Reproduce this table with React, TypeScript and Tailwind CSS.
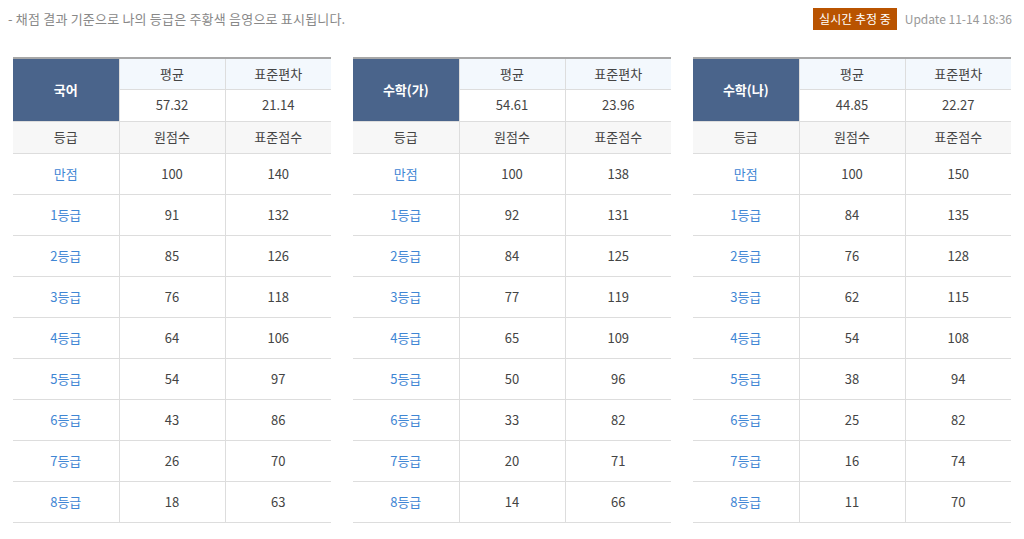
import React from 'react';

type Subject = {
  name: string;
  avg: string;
  sd: string;
  rows: [string, number, number][];
};

const grades = ['만점', '1등급', '2등급', '3등급', '4등급', '5등급', '6등급', '7등급', '8등급'];

function build(raw: number[], std: number[]): [string, number, number][] {
  return grades.map((g, i) => [g, raw[i], std[i]]);
}

const subjects: Subject[] = [
  {
    name: '국어',
    avg: '57.32',
    sd: '21.14',
    rows: build([100, 91, 85, 76, 64, 54, 43, 26, 18], [140, 132, 126, 118, 106, 97, 86, 70, 63]),
  },
  {
    name: '수학(가)',
    avg: '54.61',
    sd: '23.96',
    rows: build([100, 92, 84, 77, 65, 50, 33, 20, 14], [138, 131, 125, 119, 109, 96, 82, 71, 66]),
  },
  {
    name: '수학(나)',
    avg: '44.85',
    sd: '22.27',
    rows: build([100, 84, 76, 62, 54, 38, 25, 16, 11], [150, 135, 128, 115, 108, 94, 82, 74, 70]),
  },
];

function ScoreTable({ s }: { s: Subject }) {
  return (
    <table className="w-[318px] table-fixed border-collapse border-t-2 border-t-[#a7a7a7] text-[13px] text-[#444]">
      <colgroup>
        <col className="w-[106px]" />
        <col className="w-[106px]" />
        <col className="w-[106px]" />
      </colgroup>
      <tbody>
        <tr className="h-[31px]">
          <th rowSpan={2} className="bg-[#4a648b] font-bold text-white border-b border-[#dddddd]">
            {s.name}
          </th>
          <td className="bg-[#f3f8fd] text-center border-l border-b border-[#dddddd]">평균</td>
          <td className="bg-[#f3f8fd] text-center border-l border-b border-[#dddddd]">표준편차</td>
        </tr>
        <tr className="h-[32px]">
          <td className="text-center border-l border-b border-[#dddddd]">{s.avg}</td>
          <td className="text-center border-l border-b border-[#dddddd]">{s.sd}</td>
        </tr>
        <tr className="h-[32px] bg-[#f7f7f7]">
          <td className="text-center border-b border-[#dddddd]">등급</td>
          <td className="text-center border-l border-b border-[#dddddd]">원점수</td>
          <td className="text-center border-l border-b border-[#dddddd]">표준점수</td>
        </tr>
        {s.rows.map(([g, raw, std]) => (
          <tr key={g} className="h-[41px]">
            <td className="text-center text-[#3f86d4] border-b border-[#dddddd]">{g}</td>
            <td className="text-center border-l border-b border-[#dddddd]">{raw}</td>
            <td className="text-center border-l border-b border-[#dddddd]">{std}</td>
          </tr>
        ))}
      </tbody>
    </table>
  );
}

export default function App() {
  return (
    <div
      className="w-[1024px] h-[539px] bg-white overflow-hidden"
      style={{ fontFamily: '"Noto Sans CJK KR", "Noto Sans", sans-serif' }}
    >
      <div className="flex items-center justify-between h-[36px] pl-[8px] pr-[12px] pt-[1px]">
        <p className="text-[13px] tracking-[0.2px] text-[#888]">- 채점 결과 기준으로 나의 등급은 주황색 음영으로 표시됩니다.</p>
        <div className="flex items-center gap-[8px]">
          <span className="bg-[#b95300] text-white text-[12px] px-[6px] h-[22px] leading-[22px]">실시간 추정 중</span>
          <span className="text-[12px] text-[#999]">Update 11-14 18:36</span>
        </div>
      </div>
      <div className="flex gap-[22px] pl-[13px] mt-[21px]">
        {subjects.map((s) => (
          <ScoreTable key={s.name} s={s} />
        ))}
      </div>
    </div>
  );
}
